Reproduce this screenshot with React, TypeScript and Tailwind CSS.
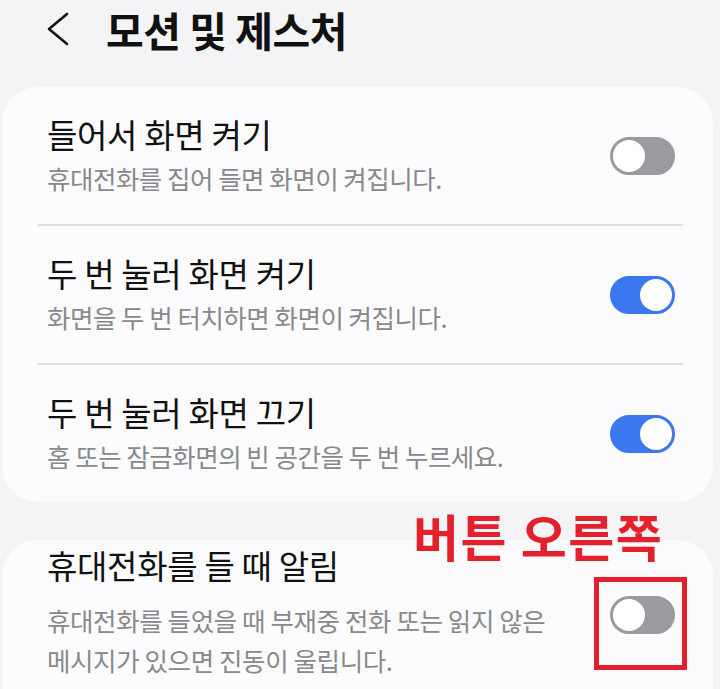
interface SettingRowProps {
  title: string;
  description: string[];
  checked: boolean;
  divider?: boolean;
}

function Toggle({ checked }: { checked: boolean }) {
  const track = checked ? "bg-[#3b77ef] border-[#3b77ef]" : "bg-[#9b9b9f] border-[#9b9b9f]";
  return (
    <div
      className={`relative w-[65px] h-[38px] rounded-full border-[3px] shrink-0 flex items-center ${track} ${
        checked ? "justify-end" : "justify-start"
      }`}
    >
      <div className="w-[32px] h-[32px] rounded-full bg-white" />
    </div>
  );
}

function SettingRow({ title, description, checked, divider }: SettingRowProps) {
  return (
    <div className="relative">
      <div className="flex items-center pl-[45px] pr-[38px] h-[137px]">
        <div className="flex-1 min-w-0">
          <div className="text-[33px] leading-[40px] text-[#111111] tracking-[-0.3px]">{title}</div>
          <div className="mt-[4px] text-[25.5px] leading-[40px] text-[#89898b] tracking-[-0.5px]">
            {description.map((line) => (
              <div key={line}>{line}</div>
            ))}
          </div>
        </div>
        <Toggle checked={checked} />
      </div>
      {divider && <div className="ml-[36px] mr-[30px] h-[2px] bg-[#e0e0e2]" />}
    </div>
  );
}

export default function App() {
  return (
    <div
      className="w-[720px] h-[689px] overflow-hidden bg-[#f4f4f6] relative"
      style={{ fontFamily: '"Noto Sans CJK KR", "Noto Sans", sans-serif' }}
    >
      <header className="h-[87px] flex items-center pb-[30px]">
        <svg className="ml-[46px] w-[24px] h-[34px]" viewBox="0 0 24 34" fill="none">
          <polyline
            points="21,2 3,17 21,32"
            stroke="#111111"
            strokeWidth="2.6"
            strokeLinecap="round"
            strokeLinejoin="round"
          />
        </svg>
        <h1 className="ml-[36px] text-[41px] leading-[48px] font-bold text-[#111111] tracking-[-0.5px]">
          모션 및 제스처
        </h1>
      </header>

      <div className="ml-[2px] w-[711px] rounded-[36px] bg-[#fcfcfe]">
        <SettingRow
          title="들어서 화면 켜기"
          description={["휴대전화를 집어 들면 화면이 켜집니다."]}
          checked={false}
          divider
        />
        <SettingRow
          title="두 번 눌러 화면 켜기"
          description={["화면을 두 번 터치하면 화면이 켜집니다."]}
          checked
          divider
        />
        <SettingRow
          title="두 번 눌러 화면 끄기"
          description={["홈 또는 잠금화면의 빈 공간을 두 번 누르세요."]}
          checked
        />
      </div>

      <div className="mt-[38px] ml-[2px] w-[711px] h-[200px] rounded-t-[36px] bg-[#fcfcfe]">
        <div className="flex items-center pl-[45px] pr-[38px] pt-[10px]">
          <div className="flex-1 min-w-0">
            <div className="-mt-[5px] text-[33px] leading-[40px] text-[#111111] tracking-[-0.3px]">
              휴대전화를 들 때 알림
            </div>
            <div className="mt-[15px] text-[25.5px] leading-[40px] text-[#89898b] tracking-[-0.4px]">
              <div>휴대전화를 들었을 때 부재중 전화 또는 읽지 않은</div>
              <div>메시지가 있으면 진동이 울립니다.</div>
            </div>
          </div>
          <Toggle checked={false} />
        </div>
      </div>

      {/* annotation overlay */}
      <div className="absolute left-[413px] top-[503px] text-[50px] font-bold text-[#e3202b] leading-[64px] tracking-[1.5px]">
        버튼 오른쪽
      </div>
      <div className="absolute left-[594px] top-[577px] w-[93px] h-[93px] border-[5px] border-[#e3202b]" />
    </div>
  );
}
